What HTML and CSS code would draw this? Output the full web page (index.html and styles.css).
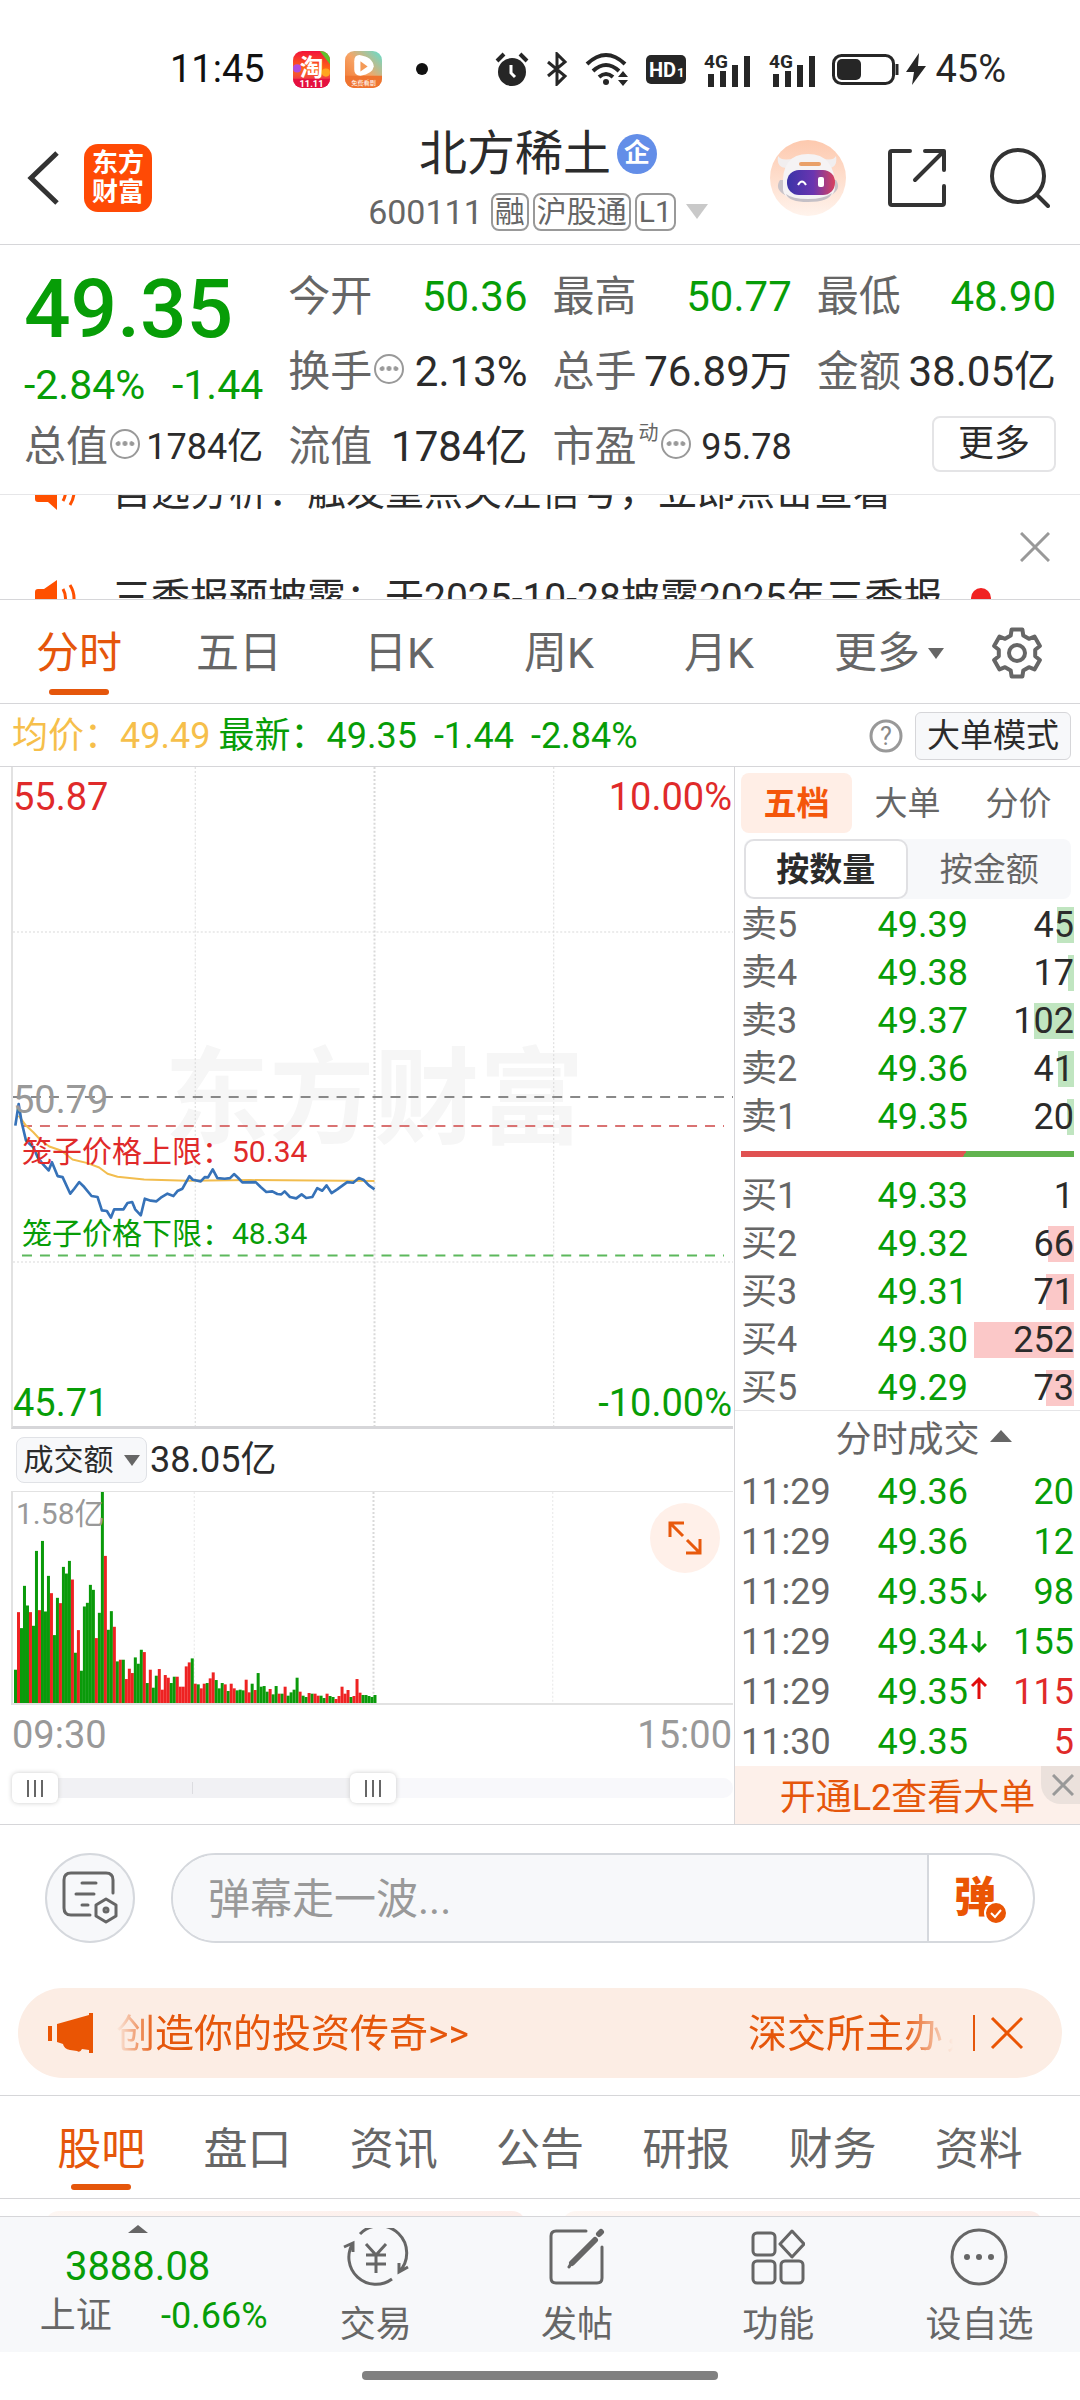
FILE: index.html
```html
<!DOCTYPE html>
<html lang="zh-CN">
<head>
<meta charset="utf-8">
<meta name="viewport" content="width=device-width, initial-scale=1">
<title>北方稀土 600111</title>
<link rel="stylesheet" href="styles.css">
</head>
<body>
<div class="status">
  <span class="status-time">11:45</span>
  <svg class="app-icon" viewBox="0 0 36 36" aria-hidden="true">
    <defs><linearGradient id="tb" x1="0" y1="0" x2="0" y2="1"><stop offset="0" stop-color="#f3123c"/><stop offset=".5" stop-color="#ff6a13"/><stop offset="1" stop-color="#e0127a"/></linearGradient></defs>
    <rect width="36" height="36" rx="9" fill="url(#tb)"/>
    <path d="M26 0h1a9 9 0 0 1 9 9v4z" fill="#5fc32c"/><circle cx="4" cy="17" r="4" fill="#b04be0"/><circle cx="32" cy="21" r="4" fill="#ffa51f"/>
    <path d="M0 27h36a9 9 0 0 1-9 9H9a9 9 0 0 1-9-9z" fill="#e5103f"/>
    <text x="18" y="24" text-anchor="middle" font-size="23" font-weight="700" fill="#fff">淘</text>
    <text x="18" y="35" text-anchor="middle" font-size="9" font-weight="700" fill="#fff">11.11</text>
  </svg>
  <svg class="app-icon second" viewBox="0 0 36 36" aria-hidden="true">
    <defs><linearGradient id="vd" x1="1" y1="0" x2="0" y2="1"><stop offset="0" stop-color="#5fe0d0"/><stop offset=".5" stop-color="#f7a465"/><stop offset="1" stop-color="#f0702a"/></linearGradient></defs>
    <rect width="36" height="36" rx="9" fill="url(#vd)"/>
    <path d="M0 24h36v3a9 9 0 0 1-9 9H9a9 9 0 0 1-9-9z" fill="#ef7430"/>
    <path d="M14 4q-5 0-5 6v8q0 6 6 6 12-2 13-9-1-9-14-11z" fill="#fff"/><path d="M15 10l7 5-7 5z" fill="#f49a57"/>
    <text x="18" y="33" text-anchor="middle" font-size="6" fill="#fff">免费看剧</text>
  </svg>
  <span class="status-dot"></span>
  <span class="status-right">
    <svg width="34" height="36" viewBox="0 0 34 36" fill="#262626"><circle cx="17" cy="21" r="14"/><path d="M2 10l7-7M32 10l-7-7" stroke="#262626" stroke-width="4"/><path d="M16 14v8l4 4" fill="none" stroke="#fff" stroke-width="3"/></svg>
    <svg class="bt" width="22" height="34" viewBox="0 0 22 34" fill="none" stroke="#262626" stroke-width="3"><path d="M2 10l17 14-8 8V2l8 8L2 24"/></svg>
    <svg class="wifi" width="44" height="34" viewBox="0 0 44 34"><g fill="none" stroke="#262626" stroke-width="4"><path d="M2 12q19-18 38 0M8 19q13-12 26 0M14 25q7-6 14 0"/></g><circle cx="21" cy="30" r="3" fill="#262626"/><path d="M33 25l5-6 5 6zM33 28h10l-5 6z" fill="#262626"/></svg>
    <svg class="hd" width="40" height="29" viewBox="0 0 40 29"><rect width="40" height="29" rx="5" fill="#262626"/><text x="3" y="22" font-size="20" font-weight="700" fill="#fff">HD</text><text x="31" y="22" font-size="13" font-weight="700" fill="#fff">1</text></svg>
    <svg class="sig" width="47" height="35" viewBox="0 -2 47 35" fill="#262626"><text x="0" y="14" font-size="19" font-weight="700">4G</text><path d="M4 20h6v13H4zM16 17h6v16h-6zM28 11h6v22h-6zM40 2h6v31h-6z"/></svg>
    <svg class="sig" width="47" height="35" viewBox="0 -2 47 35" fill="#262626"><text x="0" y="14" font-size="19" font-weight="700">4G</text><path d="M4 20h6v13H4zM16 17h6v16h-6zM28 11h6v22h-6zM40 2h6v31h-6z"/></svg>
    <svg class="batt" width="68" height="31" viewBox="0 0 68 31"><rect x="1.500" y="1.500" width="60" height="28" rx="8" fill="none" stroke="#262626" stroke-width="3"/><rect x="5" y="5" width="24" height="21" rx="5" fill="#262626"/><path d="M65 10v11" stroke="#262626" stroke-width="3"/></svg>
    <svg width="22" height="32" viewBox="0 0 22 32"><path d="M14 0L1 19h8L7 32l14-19h-8z" fill="#262626"/></svg>
    <span class="status-pct">45%</span>
  </span>
</div>

<header class="header">
  <div class="header-left">
    <button class="icon-btn" aria-label="返回"><svg width="34" height="56" viewBox="0 0 34 56" fill="none" stroke="#333" stroke-width="5"><path d="M31 3L5 28l26 25"/></svg></button>
    <span class="logo"><span>东方</span><span>财富</span></span>
  </div>
  <div class="header-mid">
    <h1 class="title">北方稀土<span class="badge-qi">企</span></h1>
    <div class="code">600111<span class="tag">融</span><span class="tag">沪股通</span><span class="tag">L1</span><i class="tri-down light"></i></div>
  </div>
  <div class="header-right">
    <button class="icon-btn" aria-label="智能助手">
      <svg width="76" height="76" viewBox="0 0 76 76">
        <defs><linearGradient id="rb" x1="0" y1="0" x2="0" y2="1"><stop offset="0" stop-color="#fdc9ae"/><stop offset="1" stop-color="#fff3ec"/></linearGradient><linearGradient id="vz" x1="0" y1="0" x2="1" y2="0"><stop offset="0" stop-color="#3b34a8"/><stop offset=".55" stop-color="#6a35b0"/><stop offset="1" stop-color="#d8435e"/></linearGradient></defs>
        <circle cx="38" cy="38" r="38" fill="url(#rb)"/>
        <path d="M8 16q-2 12 9 12l8-10q-13 4-17-2zM66 16q2 12-8 12l-8-10q13 4 16-2z" fill="#f1eeef"/>
        <path d="M10 40q-6 9 5 15l5-15zM66 40q6 9-5 15l-5-15z" fill="#c9c3c8"/>
        <path d="M13 47Q11 14 38 14t27 33q0 14-27 14T13 47z" fill="#f5f3f4"/>
        <path d="M16 54q6 5 22 5t24-6q-3 9-24 9-19 0-22-8z" fill="#c5c0c6"/>
        <rect x="29" y="22" width="22" height="4" rx="2" fill="#e9a069"/>
        <rect x="17" y="30" width="48" height="25" rx="12" fill="url(#vz)"/>
        <path d="M28 45q4-7 8 0" fill="none" stroke="#fff" stroke-width="2"/><rect x="48" y="37" width="6" height="10" rx="2" fill="#fff"/>
      </svg>
    </button>
    <button class="icon-btn share" aria-label="分享"><svg width="58" height="58" viewBox="0 0 58 58" fill="none" stroke="#333" stroke-width="4" stroke-linecap="round" stroke-linejoin="round"><path d="M22 2H4q-2 0-2 2v50q0 2 2 2h50q2 0 2-2V37M37 2h19v19M55 3L27 31"/></svg></button>
    <button class="icon-btn search" aria-label="搜索"><svg width="60" height="60" viewBox="0 0 60 60" fill="none" stroke="#333" stroke-width="4" stroke-linecap="round"><circle cx="28" cy="28" r="26"/><path d="M47 47l11 11"/></svg></button>
  </div>
</header>

<section class="quote">
  <div class="quote-main">
    <div class="price">49.35</div>
    <div class="change"><span>-2.84%</span><span>-1.44</span></div>
  </div>
  <div class="stat"><span class="k">今开</span><span class="v down">50.36</span></div>
  <div class="stat"><span class="k">最高</span><span class="v down">50.77</span></div>
  <div class="stat"><span class="k">最低</span><span class="v down">48.90</span></div>
  <div class="stat"><span class="k">换手<i class="more-dot"></i></span><span class="v">2.13%</span></div>
  <div class="stat"><span class="k">总手</span><span class="v">76.89万</span></div>
  <div class="stat"><span class="k">金额</span><span class="v">38.05亿</span></div>
  <div class="stat"><span class="k">总值<i class="more-dot"></i></span><span class="v small">1784亿</span></div>
  <div class="stat"><span class="k">流值</span><span class="v">1784亿</span></div>
  <div class="stat"><span class="k">市盈<sup>动</sup><i class="more-dot"></i></span><span class="v small">95.78</span></div>
  <div class="stat end"><button class="more-btn">更多</button></div>
</section>

<section class="ticker">
  <ul class="ticker-list">
    <li><svg class="horn" viewBox="0 0 44 36"><path d="M2 12q0-3 3-3h6L24 0v36l-9-8H5q-3 0-3-3z" fill="#ff5000"/><path d="M30 9q5 9 0 18M37 5q8 13 0 26" fill="none" stroke="#ff5000" stroke-width="3"/></svg><a href="#">自选分析：触发重点关注信号，立即点击查看</a></li>
    <li><svg class="horn" viewBox="0 0 44 36"><path d="M2 12q0-3 3-3h6L24 0v36l-9-8H5q-3 0-3-3z" fill="#ff5000"/><path d="M30 9q5 9 0 18M37 5q8 13 0 26" fill="none" stroke="#ff5000" stroke-width="3"/></svg><a href="#">三季报预披露：于2025-10-28披露2025年三季报</a><span class="new-dot"></span></li>
  </ul>
  <button class="icon-btn" aria-label="关闭"><svg width="30" height="30" viewBox="0 0 30 30" stroke="#999" stroke-width="3"><path d="M1 1l28 28M29 1L1 29"/></svg></button>
</section>

<nav class="periods">
  <button class="active">分时</button><button>五日</button><button>日K</button><button>周K</button><button>月K</button>
  <button>更多<i class="tri-down"></i></button>
  <button aria-label="设置"><svg width="52" height="52" viewBox="-26 -26 52 52" fill="none" stroke="#666" stroke-width="4" stroke-linejoin="round"><path d="M-6.300-17.400L-5.400-23.400H5.400L6.300-17.400 11.900-14.200 17.500-16.400 22.900-7 18.200-3.200V3.200L22.900 7 17.500 16.400 11.900 14.200 6.300 17.400 5.400 23.400H-5.400L-6.300 17.400-11.900 14.200-17.500 16.400-22.900 7-18.200 3.200V-3.200L-22.900-7-17.500-16.400-11.900-14.200Z"/><circle r="8"/></svg></button>
</nav>

<div class="legend">
  <span class="avg">均价：49.49</span>
  <span class="last">最新：49.35</span><span class="last">-1.44</span><span class="last">-2.84%</span>
  <button class="icon-btn help" aria-label="帮助"><svg width="34" height="34" viewBox="0 0 34 34"><circle cx="17" cy="17" r="15" fill="none" stroke="#999" stroke-width="3"/><text x="17" y="26" font-size="25" text-anchor="middle" fill="#888">?</text></svg></button>
  <button class="mode-btn">大单模式</button>
</div>

<main class="board">
  <section class="charts">
    <div class="price-chart">
      <span class="watermark">东方财富</span>
      <svg viewBox="12 767 721 661" preserveAspectRatio="none" aria-hidden="true">
        <g stroke="#d9d9d9" stroke-dasharray="2 2"><path d="M194.500 767v661M553.500 767v661M12 932.500h721M12 1263.500h721"/><path d="M374 767v661" stroke-width="2"/></g>
        <path d="M12 1098h721" stroke="#888" stroke-width="2" stroke-dasharray="10 8"/>
        <path d="M21 1127h703" stroke="#d97272" stroke-width="2" stroke-dasharray="10 8"/>
        <path d="M21 1257h703" stroke="#5cb85c" stroke-width="2" stroke-dasharray="10 8"/>
        <svg x="0" y="1080" width="390" height="180" viewBox="0 0 1170 540" fill="none" stroke-linejoin="round">
          <polyline stroke="#f2bd4e" stroke-width="6" points="53,110 75,140 97,160 120,185 145,203 180,215 215,242 260,253 295,266 320,285 350,294 430,302 560,306 750,304 1122,307"/>
          <polyline stroke="#3672b8" stroke-width="8" points="43,140 53,75 62,130 75,185 97,205 110,235 125,255 143,275 153,250 170,292 185,295 208,345 220,330 235,310 250,325 272,352 290,355 303,395 318,397 330,417 340,392 368,392 380,373 394,370 403,392 420,410 432,360 450,366 467,368 480,357 500,345 518,352 530,337 545,330 566,292 576,303 600,308 612,295 622,296 636,272 650,298 672,300 688,298 700,286 712,297 725,311 765,310 780,325 797,340 815,338 830,346 842,347 852,338 868,355 887,359 903,347 917,358 935,355 950,328 965,336 978,320 993,343 1010,332 1040,310 1058,312 1075,298 1090,304 1105,320 1122,332"/>
        </svg>
      </svg>
      <span class="lbl up tl">55.87</span><span class="lbl up tr">10.00%</span>
      <span class="lbl mid">50.79</span>
      <span class="cage up upper">笼子价格上限：50.34</span>
      <span class="cage down lower">笼子价格下限：48.34</span>
      <span class="lbl down bl">45.71</span><span class="lbl down br">-10.00%</span>
    </div>
    <div class="vol-head"><button class="chip">成交额<i class="tri-down"></i></button><span>38.05亿</span></div>
    <div class="vol-chart">
      <svg id="volume" viewBox="0 0 721 634" preserveAspectRatio="none" aria-hidden="true">
        <g stroke="#d9d9d9" stroke-dasharray="6 6"><path d="M181.500 0v634M540.500 0v634"/><path d="M361 0v634" stroke-width="2"/></g>
      </svg>
      <span class="vol-max">1.58亿</span>
      <button class="expand" aria-label="全屏"><svg width="36" height="36" viewBox="0 0 36 36" fill="none" stroke="#e8590c" stroke-width="3"><path d="M3 17V3h14M3 3l13 13M33 19v14H19M33 33L20 20"/></svg></button>
    </div>
    <div class="axis"><span>09:30</span><span>15:00</span></div>
    <div class="range"><span class="track"></span>
      <input type="range" min="0" max="100" value="0" aria-label="开始时间"><input type="range" min="0" max="100" value="50" aria-label="结束时间">
    </div>
  </section>

  <aside class="book">
    <div class="book-tabs"><button class="active">五档</button><button>大单</button><button>分价</button></div>
    <div class="segment"><button class="active">按数量</button><button>按金额</button></div>
    <table class="depth sell">
      <tr><th>卖5</th><td>49.39</td><td style="--share:17%">45</td></tr>
      <tr><th>卖4</th><td>49.38</td><td style="--share:6%">17</td></tr>
      <tr><th>卖3</th><td>49.37</td><td style="--share:40%">102</td></tr>
      <tr><th>卖2</th><td>49.36</td><td style="--share:16%">41</td></tr>
      <tr><th>卖1</th><td>49.35</td><td style="--share:7%">20</td></tr>
    </table>
    <div class="ratio"></div>
    <table class="depth buy">
      <tr><th>买1</th><td>49.33</td><td style="--share:0%">1</td></tr>
      <tr><th>买2</th><td>49.32</td><td style="--share:26%">66</td></tr>
      <tr><th>买3</th><td>49.31</td><td style="--share:28%">71</td></tr>
      <tr><th>买4</th><td>49.30</td><td style="--share:100%">252</td></tr>
      <tr><th>买5</th><td>49.29</td><td style="--share:28%">73</td></tr>
    </table>
    <button class="deals-title">分时成交<i class="tri-up"></i></button>
    <table class="deals">
      <tr><th>11:29</th><td>49.36</td><td class="down">20</td></tr>
      <tr><th>11:29</th><td>49.36</td><td class="down">12</td></tr>
      <tr><th>11:29</th><td>49.35<svg viewBox="0 0 16 24"><path d="M8 1v20M1 14l7 7 7-7"/></svg></td><td class="down">98</td></tr>
      <tr><th>11:29</th><td>49.34<svg viewBox="0 0 16 24"><path d="M8 1v20M1 14l7 7 7-7"/></svg></td><td class="down">155</td></tr>
      <tr><th>11:29</th><td>49.35<svg class="rise" viewBox="0 0 16 24"><path d="M8 23V3M1 10l7-7 7 7"/></svg></td><td class="up">115</td></tr>
      <tr><th>11:30</th><td>49.35</td><td class="up">5</td></tr>
    </table>
    <div class="l2"><a href="#">开通L2查看大单</a><button class="l2-close" aria-label="关闭"><svg width="22" height="22" viewBox="0 0 22 22" stroke="#999" stroke-width="3"><path d="M1 1l20 20M21 1L1 21"/></svg></button></div>
  </aside>
</main>

<form class="danmu">
  <button type="button" class="round" aria-label="弹幕设置"><svg width="56" height="54" viewBox="0 0 56 54" fill="none" stroke="#666" stroke-width="3" stroke-linecap="round"><path d="M28 44H9q-7 0-7-7V9q0-7 7-7h35q7 0 7 7v13M20 12h14M14 23h18M20 34h6"/><path d="M44 28l10 6v11l-10 6-10-6V34z" stroke-linejoin="round"/><circle cx="44" cy="39" r="2"/></svg></button>
  <div class="field">
    <input type="text" placeholder="弹幕走一波..." aria-label="弹幕">
    <button type="button" class="dan"><span>弹</span><svg class="tick" width="24" height="24" viewBox="0 0 24 24"><circle cx="12" cy="12" r="11" fill="#ea5504" stroke="#fff" stroke-width="2"/><path d="M7 12l4 4 6-7" fill="none" stroke="#fff" stroke-width="2"/></svg></button>
  </div>
</form>

<div class="promo">
  <svg width="46" height="40" viewBox="0 0 46 40" fill="#ea5504"><path d="M0 13h4v15H0zM9 11L41 2V0h4v40h-4v-3l-7-1q-2 4-5 2l-7-1q-6-1-7-6l-6-2z"/></svg>
  <a href="#" class="marquee"><span>创造你的投资传奇&gt;&gt;</span><span>深交所主办，</span></a>
  <button class="icon-btn" aria-label="关闭"><svg width="34" height="34" viewBox="0 0 34 34" stroke="#ea5504" stroke-width="3"><path d="M2 2l30 30M32 2L2 32"/></svg></button>
</div>

<nav class="sections">
  <button class="active">股吧</button><button>盘口</button><button>资讯</button><button>公告</button><button>研报</button><button>财务</button><button>资料</button>
</nav>
<div class="cards"><span></span><span></span></div>

<nav class="bottom">
  <button class="index"><i class="tri-up"></i><span class="index-val">3888.08</span><span class="index-row"><span>上证</span><span class="down">-0.66%</span></span></button>
  <button><svg width="66" height="58" viewBox="0 0 66 58" fill="none" stroke="#666" stroke-width="3"><path d="M17 6A27 27 0 0 1 56 44M49 51A27 27 0 0 1 10 15M1 19l9-4v9M65 39l-9 5v-9M23 16l10 11 10-11M33 27v18M23 27h20M23 36h20"/></svg>交易</button>
  <button><svg width="56" height="58" viewBox="0 0 56 58" fill="none" stroke="#666" stroke-width="3" stroke-linecap="round"><path d="M37 3H7Q2 3 2 8v42q0 5 5 5h41q5 0 5-5V19"/><path d="M50 6l2-2M46 12L23 35" stroke-width="6"/><path d="M20 39l3-5" stroke-width="3"/></svg>发帖</button>
  <button><svg width="54" height="56" viewBox="0 0 54 56" fill="none" stroke="#666" stroke-width="3" stroke-linejoin="round"><rect x="2" y="4" width="22" height="22" rx="4"/><rect x="2" y="32" width="22" height="22" rx="4"/><rect x="30" y="32" width="22" height="22" rx="4"/><path d="M41 2l12 13-12 13-12-13z"/></svg>功能</button>
  <button><svg width="58" height="58" viewBox="0 0 58 58"><circle cx="29" cy="29" r="27" fill="none" stroke="#666" stroke-width="3"/><g fill="#666"><circle cx="17" cy="29" r="3"/><circle cx="29" cy="29" r="3"/><circle cx="41" cy="29" r="3"/></g></svg>设自选</button>
</nav>
<div class="home"><span></span></div>
<script src="volume.js"></script>
</body>
</html>
```
FILE: volume.js
```js
// Turnover per minute, 09:30 to 11:30. Positive: price fell, negative: price rose.
const turnover = [
  100, -273, 225, 352, 293, -273, 232, 457, -279, 487, 275, 382, -330, 204, 316, -300,
  409, 389, 427, -371, 151, -219, 97, 290, 301, 355, 340, -195, 271, 634, -442, 220,
  276, -229, 125, -130, 130, -72, -103, -90, 137, 118, 160, -153, 60, -100, 46, 82,
  -102, -40, -84, -76, 60, 79, -79, -49, -49, -110, -122, 134, -58, 56, -44, -58,
  60, -74, -92, 69, 44, 60, -56, 36, -58, -44, 38, 40, 38, -70, -32, 58,
  -39, 90, 49, 51, 34, -42, 26, 51, -28, 28, -49, 22, 32, 40, 76, -34,
  22, 18, -30, 28, -28, -22, 22, 15, -28, 21, 18, -12, -21, -49, -28, -39,
  18, -21, -72, -31, 24, 24, 21, 18, 24
];
const svg = document.getElementById("volume");
turnover.forEach((value, i) => {
  const height = Math.abs(value);
  const bar = document.createElementNS("http://www.w3.org/2000/svg", "rect");
  bar.setAttribute("x", 1 + 3 * i);
  bar.setAttribute("y", 634 - height);
  bar.setAttribute("width", 3);
  bar.setAttribute("height", height);
  bar.setAttribute("class", value > 0 ? "bar-down" : "bar-up");
  svg.appendChild(bar);
});
```
FILE: styles.css
```css
* { box-sizing: border-box; }
:root { --green: #079d07; --red: #e02a2a; --orange: #e5560b; --line: #d6d6d9; --grey: #666; }
body { margin: 0; background: #fff; color: #2b2b2b; font-family: Roboto, "Noto Sans CJK SC", sans-serif; font-size: 36px; line-height: 48px; }
button { margin: 0; padding: 0; border: 0; background: none; color: inherit; font: inherit; line-height: inherit; cursor: pointer; }
a { color: inherit; text-decoration: none; }
svg { display: block; flex: none; }
.down { color: var(--green); }
.up { color: var(--red); }
.icon-btn { display: flex; align-items: center; }

.tri-down, .tri-up { display: inline-block; border: 8px solid transparent; flex: none; }
.tri-down { border-top: 11px solid var(--grey); border-bottom: 0; }
.tri-up { border-width: 0 11px 12px; border-bottom-color: var(--grey); }
.tri-down.light { border-width: 15px 11px 0; border-top-color: #c9c9c9; margin-left: 10px; }

.status { display: flex; align-items: center; height: 111px; padding: 27px 74px 0 170px; color: #111; font-size: 38px; }
.status-time { width: 123px; }
.app-icon { width: 37px; height: 37px; }
.app-icon.second { margin-left: 15px; }
.status-dot { width: 12px; height: 12px; margin-left: 34px; border-radius: 50%; background: #111; }
.status-right { display: flex; align-items: center; margin-left: auto; color: #262626; }
.bt { margin-left: 17px; }
.wifi, .hd { margin-left: 17px; }
.sig { margin-left: 18px; }
.batt { margin: 0 5px 0 16px; }
.status-pct { margin-left: 8px; }

.header { display: grid; grid-template-columns: 1fr auto 1fr; align-items: center; height: 134px; padding: 0 30px 0 26px; border-bottom: 1px solid var(--line); }
.header-left, .header-right { display: flex; align-items: center; }
.header-right { justify-content: flex-end; }
.share { margin-left: 42px; }
.search { margin-left: 44px; }
.logo { display: grid; align-content: center; width: 68px; height: 68px; margin-left: 24px; border-radius: 14px; background: #ff4a05; color: #fff; font-size: 26px; font-weight: 700; line-height: 29px; text-align: center; }
.header-mid { padding-top: 8px; }
.title { display: flex; justify-content: center; align-items: center; margin: 0; font-size: 48px; font-weight: 400; line-height: 60px; }
.badge-qi { width: 40px; height: 40px; margin-left: 6px; border-radius: 50%; background: #638ee8; color: #fff; font-size: 26px; font-weight: 700; line-height: 38px; text-align: center; }
.code { display: flex; align-items: center; height: 56px; color: var(--grey); font-size: 34px; }
.tag { margin-left: 4px; padding: 0 2px; border: 2px solid #999; border-radius: 8px; font-size: 30px; line-height: 34px; }
.tag:first-of-type { margin-left: 8px; }

.quote { display: grid; grid-template-columns: repeat(4, 1fr); grid-auto-rows: 75px; column-gap: 25px; padding: 14px 24px 10px; border-bottom: 1px solid #e6e6e8; }
.quote-main { grid-row: span 2; color: var(--green); }
.price { font-size: 82px; font-weight: 500; line-height: 100px; }
.change { display: flex; justify-content: space-between; font-size: 41px; line-height: 52px; }
.stat { display: flex; justify-content: space-between; align-items: center; font-size: 42px; }
.stat.end { justify-content: flex-end; }
.k { display: flex; align-items: center; color: var(--grey); }
.k sup { align-self: flex-start; margin-left: 2px; font-size: 20px; line-height: 20px; }
.small { font-size: 36px; }
.more-dot { width: 30px; height: 30px; margin: -6px 0 0 2px; border: 2px solid #999; border-radius: 50%; background: radial-gradient(circle at center, #999 2px, transparent 3px) center / 7px 7px content-box no-repeat; background-repeat: repeat-x; padding: 9px 3px; }
.more-btn { width: 124px; height: 56px; margin-top: -6px; border: 2px solid #e4e4e6; border-radius: 8px; font-size: 36px; }

.ticker { display: flex; align-items: center; height: 105px; padding: 0 30px 0 33px; overflow: hidden; border-bottom: 1px solid var(--line); }
.ticker-list { flex: 1; align-self: flex-start; margin: -56px 0 0; padding: 0; list-style: none; font-size: 39px; }
.ticker-list li { display: flex; align-items: center; height: 106px; white-space: nowrap; }
.horn { width: 44px; height: 36px; margin-right: 35px; }
.new-dot { width: 20px; height: 20px; margin-left: 28px; border-radius: 50%; background: #f02222; }

.periods { display: grid; grid-template-columns: repeat(5, 160fr) 180fr 76fr; height: 104px; padding-right: 24px; border-bottom: 1px solid var(--line); color: var(--grey); font-size: 43px; }
.periods button { display: flex; justify-content: center; align-items: center; position: relative; padding: 3px 2px 0 0; }
.periods .tri-down { margin-left: 8px; }
.active { color: var(--orange); }
.periods .active::after, .sections .active::after { content: ""; position: absolute; bottom: 8px; width: 60px; height: 6px; border-radius: 3px; background: var(--orange); }

.legend { display: flex; align-items: center; height: 63px; padding: 2px 9px 0 12px; border-bottom: 1px solid var(--line); }
.avg { margin-right: 8px; color: #f6bf4b; }
.last { margin-right: 17px; color: var(--green); }
.help { margin-left: auto; }
.mode-btn { width: 156px; height: 48px; margin-left: 12px; border: 1px solid var(--line); border-radius: 6px; background: #f7f8fa; font-size: 33px; line-height: 44px; }

.board { display: grid; grid-template-columns: 734fr 346fr; border-bottom: 1px solid var(--line); }
.charts { padding: 0 1px 0 12px; }
.price-chart { position: relative; height: 662px; border-bottom: 3px solid var(--line); border-left: 2px solid #e2e2e2; margin-left: -1px; }
.price-chart > svg, .vol-chart > svg { width: 100%; height: 100%; }
.price-chart > svg { position: relative; }
.watermark { position: absolute; left: 21%; top: 273px; color: #f6f6f6; font-size: 105px; font-weight: 700; line-height: 120px; }
.lbl, .cage { position: absolute; left: 0; font-size: 38px; }
.tl, .tr { top: 6px; }
.tr, .br { left: auto; right: 1px; }
.bl, .br { bottom: -1px; }
.mid { top: 309px; color: #999; }
.cage { left: 9px; font-size: 30px; }
.upper { top: 361px; }
.lower { top: 443px; }
.vol-head { display: flex; align-items: center; height: 62px; padding-left: 4px; }
.chip { display: flex; align-items: center; justify-content: center; gap: 10px; width: 131px; height: 46px; margin-right: 3px; border: 1px solid #e0e2e6; border-radius: 8px; background: #f7f8fa; font-size: 30px; }
.vol-chart { position: relative; height: 214px; margin-left: -1px; border: solid #e2e2e2; border-width: 1px 0 2px 2px; }
.bar-down { fill: #0a9a0a; }
.bar-up { fill: #ee2222; }
.vol-max { position: absolute; left: 3px; top: -2px; color: #999; font-size: 30px; }
.expand { position: absolute; right: 13px; top: 11px; display: grid; place-items: center; width: 70px; height: 70px; border-radius: 50%; background: #fff0e9; }
.axis { display: flex; justify-content: space-between; padding: 6px 1px 6px 0; color: #999; font-size: 38px; }
.range { position: relative; height: 46px; margin-bottom: 12px; }
.track { position: absolute; inset: 13px 0; border-radius: 10px; background: linear-gradient(#dcdce0, #dcdce0) 25% 50% / 1px 12px no-repeat, linear-gradient(90deg, #f1f1f4 50%, #f8f8fb 50%); }
.range input { position: absolute; inset: 0; width: 100%; margin: 0; appearance: none; background: none; pointer-events: none; }
.range input::-webkit-slider-thumb { appearance: none; width: 46px; height: 30px; border-radius: 6px; box-shadow: 0 0 5px #ccc; pointer-events: auto; background: repeating-linear-gradient(90deg, #666 0 2px, transparent 2px 7px) center / 16px 17px no-repeat, #fff; }

.book { display: flex; flex-direction: column; padding: 6px 6px 0; border-left: 1px solid var(--line); }
.book-tabs { display: grid; grid-template-columns: repeat(3, 1fr); color: var(--grey); font-size: 33px; }
.book-tabs button { height: 60px; padding-top: 2px; border-radius: 8px; }
.book-tabs .active { background: #ffeee6; color: #f4560b; font-weight: 700; }
.segment { display: grid; grid-template-columns: 1fr 1fr; margin: 6px 3px 2px; border-radius: 8px; background: #f7f8fa; color: var(--grey); font-size: 33px; }
.segment button { height: 60px; padding-top: 2px; }
.segment .active { border: 2px solid #e0e0e3; border-radius: 10px; background: #fff; color: #2b2b2b; font-weight: 700; }
table { width: 100%; border-collapse: collapse; table-layout: fixed; }
th { width: 41%; padding: 0; color: var(--grey); font-weight: 400; text-align: left; }
td { padding: 0; text-align: left; }
td:nth-child(2) { color: var(--green); }
td:last-child { text-align: right; }
.depth td:last-child { width: 30%; height: 48px; background: linear-gradient(var(--bar), var(--bar)) right center / var(--share) 36px no-repeat; }
.sell { --bar: #c0e5c0; }
.buy { --bar: #fbc8c8; }
.ratio { height: 6px; margin: 10px 0 15px; background: linear-gradient(120deg, #e05252 67%, #62b34f 67%); }
.deals-title { display: flex; justify-content: center; align-items: center; gap: 10px; height: 56px; margin: -2px -6px 0; padding: 2px 0 0 32px; border-top: 1px solid #e6e6e8; color: var(--grey); }
.deals-title .tri-up { margin-top: -8px; }
.deals { height: 298px; }
.deals th, .deals td { padding-top: 2px; }
.deals td:last-child { width: 24%; }
.deals svg { display: inline-block; width: 16px; height: 24px; margin-left: 3px; fill: none; stroke: #079d07; stroke-width: 3; }
.deals svg.rise { stroke: #e00d0d; vertical-align: 4px; }
.l2 { position: relative; height: 58px; margin: 0 -6px; background: #fdf0ea; color: var(--orange); line-height: 64px; text-align: center; }
.l2-close { position: absolute; top: 0; right: 0; display: grid; place-items: center; width: 39px; height: 38px; padding-left: 4px; border-radius: 0 0 0 20px; background: #ebe1dc; }

.danmu { display: flex; gap: 36px; padding: 28px 45px 0; }
.round { display: grid; place-items: center; width: 90px; height: 90px; border: 2px solid #d5d8dd; border-radius: 50%; background: #f7f8fa; }
.field { flex: 1; display: flex; height: 90px; overflow: hidden; border: 2px solid #d5d8dd; border-radius: 45px; }
.field input { flex: 1; min-width: 0; padding: 4px 0 0 35px; border: 0; border-radius: 0; background: #f7f8fa; font: inherit; font-size: 42px; }
.field input::placeholder { color: #999; opacity: 1; }
.dan { display: flex; align-items: center; width: 106px; padding-left: 25px; border-left: 2px solid #d5d8dd; color: #ea5504; font-size: 42px; font-weight: 900; }
.tick { margin: 30px 0 0 -12px; }

.promo { display: flex; align-items: center; height: 90px; margin: 45px 18px 17px; padding: 0 38px 0 30px; border-radius: 45px; background: #fcede4; color: var(--orange); font-size: 39px; }
.marquee { flex: 1; display: flex; justify-content: space-between; height: 48px; margin: 2px 20px 0 22px; overflow: hidden; white-space: nowrap; mask-image: linear-gradient(90deg, transparent, #000 40px, #000 calc(100% - 50px), transparent); }
.marquee span:last-child { margin-right: -29px; }
.promo .icon-btn { height: 36px; padding-left: 15px; border-left: 2px solid var(--orange); }

.sections { display: grid; grid-template-columns: repeat(7, 1fr); height: 104px; padding: 0 28px; border: solid var(--line); border-width: 1px 0; color: var(--grey); font-size: 44px; }
.sections button { position: relative; display: flex; justify-content: center; align-items: center; padding-top: 6px; }
.cards { display: grid; grid-template-columns: 1fr 1fr; gap: 36px; height: 17px; padding: 12px 37px 0 45px; overflow: hidden; }
.cards span { height: 40px; border-radius: 14px; background: linear-gradient(90deg, #fef7f3, #fdeeea); }

.bottom { display: grid; grid-template-columns: 275fr repeat(4, 201fr); height: 136px; border-top: 1px solid var(--line); background: #f7f8fa; color: var(--grey); }
.bottom button { display: flex; flex-direction: column; align-items: center; justify-content: space-between; padding: 11px 0 3px; }
.bottom button > svg { height: 58px; }
.bottom .index-val { margin-top: 12px; color: var(--green); font-size: 40px; line-height: 44px; }
.bottom .index { justify-content: flex-start; padding: 8px 0 0; }
.index .tri-up { border-width: 0 10px 8px; }
.index-row { display: flex; justify-content: space-between; width: 228px; margin: 3px 0 0 32px; }
.home { display: flex; justify-content: center; height: 48px; padding-top: 19px; }
.home span { width: 33%; height: 9px; border-radius: 4px; background: #808080; }
```
